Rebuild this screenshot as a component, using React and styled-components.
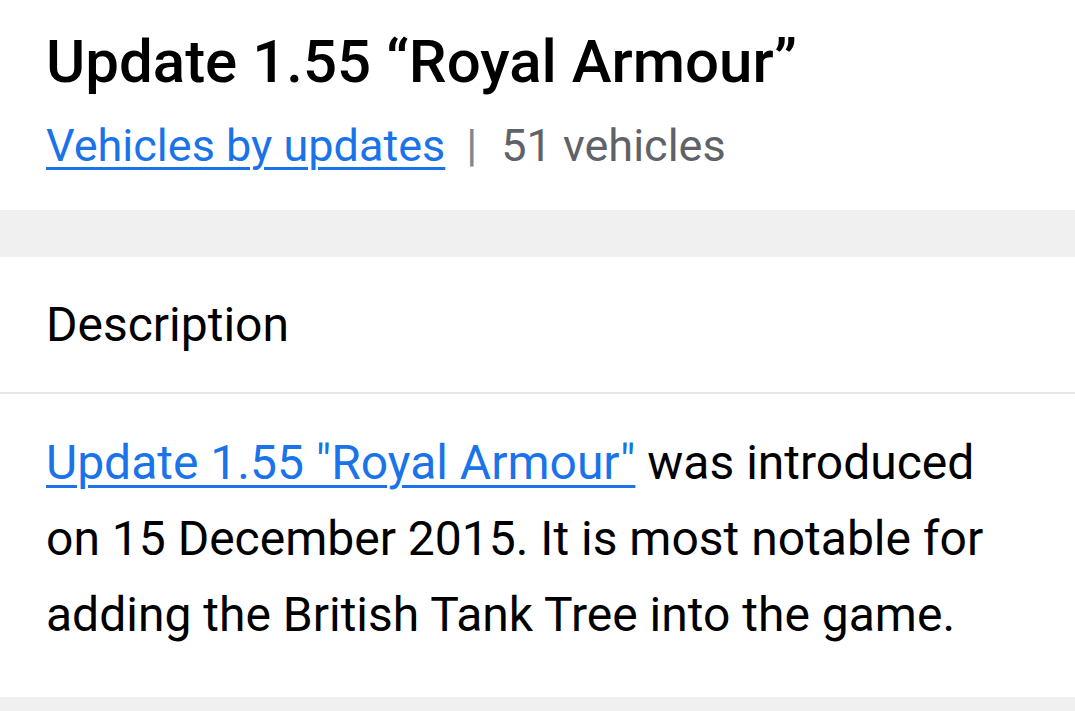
import styled, { createGlobalStyle } from "styled-components";

const GlobalStyle = createGlobalStyle`
  html, body {
    margin: 0;
    padding: 0;
    background: #f0f0f0;
    font-family: Roboto, "Noto Sans", Arial, sans-serif;
    color: #000;
  }
`;

export default function App() {
  return (
    <>
      <GlobalStyle />
      <Page>
        <Header>
          <Title>Update 1.55 “Royal Armour”</Title>
          <Meta>
            <Link href="#">Vehicles by updates</Link>
            <Separator>|</Separator>
            <Count>51 vehicles</Count>
          </Meta>
        </Header>

        <Card>
          <CardTitle>Description</CardTitle>
          <CardBody>
            <Link href="#">Update 1.55 "Royal Armour"</Link> was introduced
            on 15 December 2015. It is most notable for adding the British Tank
            Tree into the game.
          </CardBody>
        </Card>
      </Page>
    </>
  );
}

const Page = styled.div`
  display: flex;
  flex-direction: column;
  gap: 47px;
  min-height: 100vh;
`;

const Header = styled.header`
  background: #fff;
  padding: 26px 46px 37px;
`;

const Title = styled.h1`
  margin: 0;
  font-size: 60px;
  font-weight: 500;
  line-height: 1.2;
  letter-spacing: 0;
`;

const Meta = styled.div`
  margin-top: 21px;
  font-size: 45px;
  line-height: 1.2;
  display: flex;
  align-items: baseline;
  color: #5f6368;
`;

const Link = styled.a`
  color: #1a73e8;
  text-decoration: underline;
  text-decoration-thickness: 3px;
  text-underline-offset: 6px;
`;

const Separator = styled.span`
  margin: 0 24px 0 21px;
  color: #80868b;
`;

const Count = styled.span``;

const Card = styled.section`
  background: #fff;
`;

const CardTitle = styled.h2`
  margin: 0;
  padding: 39px 46px 38px;
  font-size: 48px;
  font-weight: 400;
  line-height: 1.2;
  border-bottom: 2px solid #e5e5e5;
`;

const CardBody = styled.p`
  margin: 0;
  padding: 31px 60px 44px 46px;
  font-size: 48px;
  line-height: 76px;
`;
